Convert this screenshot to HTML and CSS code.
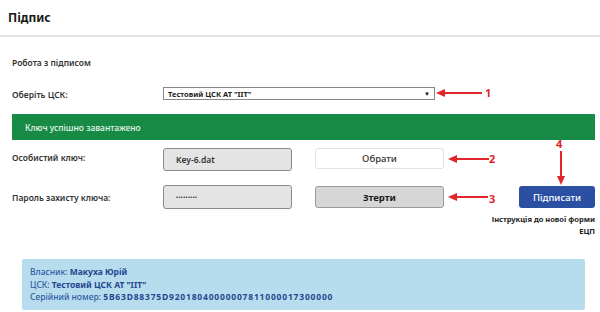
FILE: index.html
```html
<!DOCTYPE html>
<html lang="uk">
<head>
  <meta charset="UTF-8" />
  <meta name="viewport" content="width=device-width, initial-scale=1.0"/>
  <title>Підпис</title>
  <link rel="stylesheet" href="styles.css">
</head>
<body>
  <div class="page">
    <header class="header">
      <h1>Підпис</h1>
    </header>

    <main class="content">
      <div class="section-title">Робота з підписом</div>

      <div class="row row-select">
        <label class="label">Оберіть ЦСК:</label>
        <div class="select">
          <span>Тестовий ЦСК АТ "IIT"</span>
          <span class="caret">&#9660;</span>
        </div>
      </div>

      <div class="alert-success">Ключ успішно завантажено</div>

      <div class="row row-key">
        <label class="label">Особистий ключ:</label>
        <div class="field">Key-6.dat</div>
        <button class="btn btn-light">Обрати</button>
      </div>

      <div class="row row-pass">
        <label class="label">Пароль захисту ключа:</label>
        <div class="field field-pass">&bull;&bull;&bull;&bull;&bull;&bull;&bull;&bull;&bull;</div>
        <button class="btn btn-gray">Зтерти</button>
        <button class="btn btn-primary">Підписати</button>
      </div>

      <div class="instruction">Інструкція до нової форми<br>ЕЦП</div>

      <div class="info">
        <div>Власник: <b>Макуха Юрій</b></div>
        <div>ЦСК: <b>Тестовий ЦСК АТ "IIT"</b></div>
        <div>Серійний номер: <b class="serial">5B63D88375D92018040000007811000017300000</b></div>
      </div>
    </main>

    <!-- annotation arrows -->
    <svg class="marks" width="600" height="312" viewBox="0 0 600 312">
      <g stroke="#e0262c" stroke-width="2" fill="#e0262c">
        <line x1="442" y1="93" x2="482" y2="93"/>
        <polygon points="436,93 445,89 445,97" stroke="none"/>
        <line x1="454" y1="159" x2="489" y2="159"/>
        <polygon points="448,159 457,155 457,163" stroke="none"/>
        <line x1="454" y1="197" x2="488" y2="197"/>
        <polygon points="448,197 457,193 457,201" stroke="none"/>
        <line x1="561" y1="151" x2="561" y2="178"/>
        <polygon points="561,185 557,176 565,176" stroke="none"/>
      </g>
      <g class="mark-num" fill="#e0262c">
        <text x="485" y="97">1</text>
        <text x="489" y="163">2</text>
        <text x="489" y="203">3</text>
        <text x="556" y="148">4</text>
      </g>
    </svg>
  </div>
</body>
</html>
```

FILE: styles.css
```css
/* General */
body {
  margin: 0;
  font-family: 'Noto Sans', sans-serif;
  color: #222;
  background: #fff;
}

.page {
  position: relative;
  width: 600px;
  height: 312px;
  overflow: hidden;
}

/* Header */
.header {
  height: 35px;
  border-bottom: 2px solid #e4e4e4;
  display: flex;
  align-items: center;
  padding-left: 8px;
}

.header h1 {
  margin: 0;
  font-size: 12px;
  font-weight: 700;
  color: #1a1a1a;
}

/* Form */
.content {
  padding: 0 5px 0 12px;
  font-size: 8.5px;
  font-weight: 600;
}

.section-title {
  margin-top: 20px;
  line-height: 12px;
  color: #333;
}

.row {
  display: flex;
}

.label {
  width: 151px;
  color: #333;
}

.row-select {
  margin-top: 18px;
  align-items: flex-end;
  height: 13px;
}

.select {
  width: 262px;
  height: 11px;
  border: 1px solid #888;
  display: flex;
  align-items: center;
  justify-content: space-between;
  padding: 0 4px;
  font-size: 7.5px;
  font-weight: 700;
  color: #222;
}

.caret {
  font-size: 6px;
  color: #111;
}

.alert-success {
  margin-top: 14px;
  height: 26px;
  background: #178b46;
  color: #e9f5ec;
  display: flex;
  align-items: center;
  padding-left: 13px;
  font-weight: 500;
}

.row-key {
  margin-top: 8px;
  height: 23px;
}

.row-key .label {
  padding-top: 4px;
}

.row-pass {
  margin-top: 14px;
  height: 24px;
  align-items: center;
}

.field {
  width: 129px;
  height: 100%;
  box-sizing: border-box;
  background: #e4e4e4;
  border: 1px solid #8a8a8a;
  border-radius: 3px;
  display: flex;
  align-items: center;
  padding-left: 12px;
  color: #333;
}

.field-pass {
  font-size: 5px;
  letter-spacing: 0.5px;
}

.btn {
  font-family: inherit;
  font-size: 9.5px;
  border-radius: 3px;
  box-sizing: border-box;
  padding: 0;
}

.btn-light {
  margin-left: 23px;
  width: 129px;
  height: 21px;
  background: #fff;
  border: 1px solid #e2e2e2;
  color: #333;
  font-weight: 500;
}

.btn-gray {
  margin-left: 23px;
  width: 129px;
  height: 22px;
  background: #d6d6d6;
  border: 1px solid #9a9a9a;
  color: #1a1a1a;
  font-weight: 700;
}

.btn-primary {
  margin-left: auto;
  width: 76px;
  height: 22px;
  background: #2b4fa3;
  border: none;
  color: #fff;
  font-weight: 500;
}

.instruction {
  margin-top: 4px;
  text-align: right;
  font-size: 7.5px;
  font-weight: 700;
  line-height: 12px;
  color: #222;
}

/* Info box */
.info {
  margin: 22px 10px 0 10px;
  height: 51px;
  box-sizing: border-box;
  background: #b7dcee;
  border-radius: 2px;
  padding: 7px 8px;
  font-size: 8.5px;
  font-weight: 500;
  line-height: 12.5px;
  color: #2f5aa5;
}

.info b {
  font-weight: 700;
  color: #24478f;
}

.info .serial {
  letter-spacing: 0.8px;
}

/* Annotations */
.marks {
  position: absolute;
  left: 0;
  top: 0;
  pointer-events: none;
}

.mark-num text {
  font-family: 'Noto Sans', sans-serif;
  font-size: 11px;
  font-weight: 700;
}
```
